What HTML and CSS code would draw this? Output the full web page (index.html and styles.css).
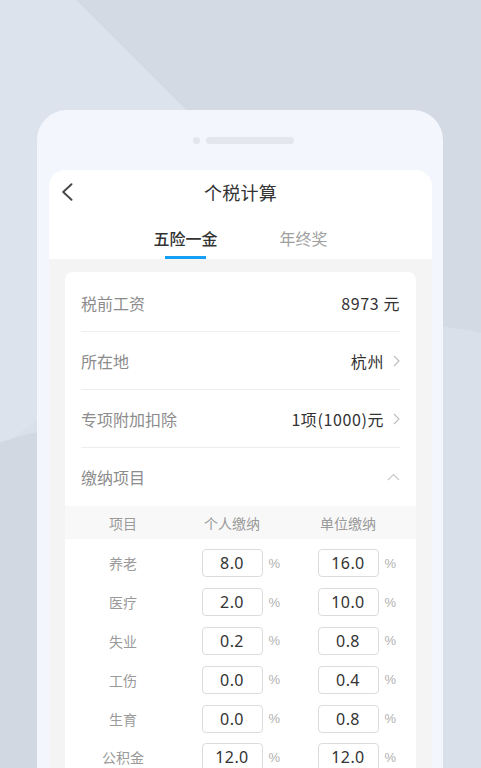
FILE: index.html
```html
<!DOCTYPE html>
<html lang="zh-CN">
<head>
<meta charset="utf-8">
<title>个税计算</title>
<link rel="stylesheet" href="styles.css">
</head>
<body>
<div class="stage">
  <div class="phone">
    <div class="notch"><span class="cam"></span><span class="speaker"></span></div>
    <div class="screen">
      <div class="nav">
        <svg class="back" width="12" height="18" viewBox="0 0 12 18"><path d="M10.5 1.2 L2.2 9 L10.5 16.8" fill="none" stroke="#474747" stroke-width="1.9" stroke-linecap="round" stroke-linejoin="round"/></svg>
        <div class="title">个税计算</div>
        <span></span>
      </div>
      <div class="tabs">
        <div class="tab active">五险一金</div>
        <div class="tab">年终奖</div>
      </div>
      <div class="content">
        <div class="card">
          <div class="row"><span class="label">税前工资</span><span class="value">8973 元</span></div>
          <div class="row"><span class="label">所在地</span><span class="value">杭州<svg class="chev" width="7" height="12" viewBox="0 0 7 12"><path d="M1 1 L6 6 L1 11" fill="none" stroke="#bdbdbd" stroke-width="1.1"/></svg></span></div>
          <div class="row"><span class="label">专项附加扣除</span><span class="value">1项(1000)元<svg class="chev" width="7" height="12" viewBox="0 0 7 12"><path d="M1 1 L6 6 L1 11" fill="none" stroke="#bdbdbd" stroke-width="1.1"/></svg></span></div>
          <div class="row last"><span class="label">缴纳项目</span><svg class="up" width="13" height="8" viewBox="0 0 13 8"><path d="M1 7 L6.5 1.5 L12 7" fill="none" stroke="#c8c8c8" stroke-width="1.1"/></svg></div>
          <div class="thead"><span>项目</span><span>个人缴纳</span><span>单位缴纳</span></div>
          <div class="tbody">
            <div class="trow"><span class="name">养老</span><span class="cell"><input class="num" value="8.0" readonly><i>%</i></span><span class="cell"><input class="num" value="16.0" readonly><i>%</i></span></div>
            <div class="trow"><span class="name">医疗</span><span class="cell"><input class="num" value="2.0" readonly><i>%</i></span><span class="cell"><input class="num" value="10.0" readonly><i>%</i></span></div>
            <div class="trow"><span class="name">失业</span><span class="cell"><input class="num" value="0.2" readonly><i>%</i></span><span class="cell"><input class="num" value="0.8" readonly><i>%</i></span></div>
            <div class="trow"><span class="name">工伤</span><span class="cell"><input class="num" value="0.0" readonly><i>%</i></span><span class="cell"><input class="num" value="0.4" readonly><i>%</i></span></div>
            <div class="trow"><span class="name">生育</span><span class="cell"><input class="num" value="0.0" readonly><i>%</i></span><span class="cell"><input class="num" value="0.8" readonly><i>%</i></span></div>
            <div class="trow"><span class="name">公积金</span><span class="cell"><input class="num" value="12.0" readonly><i>%</i></span><span class="cell"><input class="num" value="12.0" readonly><i>%</i></span></div>
          </div>
        </div>
      </div>
    </div>
  </div>
</div>
</body>
</html>
```

FILE: styles.css
```css
html, body {
  margin: 0;
  padding: 0;
}

body {
  font-family: "Noto Sans CJK SC", "Noto Sans", sans-serif;
}

.stage {
  width: 481px;
  height: 768px;
  overflow: hidden;
  padding-top: 110px;
  box-sizing: border-box;
  background:
    radial-gradient(circle at 99px 726px, #d1d8e2 0 300px, rgba(209,216,226,0) 300.5px),
    radial-gradient(circle at 367px 922px, #d9e0ea 0 600px, rgba(217,224,234,0) 600.5px),
    linear-gradient(45deg, #dce3ec 0 54.95%, rgba(220,227,236,0) 54.95%) 0 0 / 768px 768px no-repeat,
    #d3dae4;
}

.phone {
  margin-left: 37px;
  width: 406px;
  height: 700px;
  background: #f3f6fd;
  border-radius: 30px 30px 0 0;
  padding: 0 11px 0 12px;
  box-sizing: border-box;
}

.notch {
  height: 60px;
  display: flex;
  align-items: center;
  justify-content: center;
  gap: 6px;
  padding-left: 5px;
}

.cam {
  width: 7px;
  height: 7px;
  border-radius: 50%;
  background: #e3e6ec;
}

.speaker {
  width: 88px;
  height: 7px;
  border-radius: 4px;
  background: #e3e6ec;
}

.screen {
  background: #f4f4f4;
  border-radius: 16px 16px 0 0;
  overflow: hidden;
  height: 640px;
}

.nav {
  height: 44px;
  background: #fff;
  display: grid;
  grid-template-columns: 1fr auto 1fr;
  align-items: center;
}

.back {
  margin-left: 12px;
  display: block;
}

.title {
  font-size: 18px;
  color: #333;
  line-height: 24px;
  letter-spacing: 0.3px;
}

.tabs {
  height: 45px;
  background: #fff;
  display: flex;
  justify-content: center;
  gap: 62px;
}

.tab {
  display: flex;
  flex-direction: column;
  align-items: center;
  padding-top: 13px;
  font-size: 16px;
  line-height: 22px;
  color: #a0a0a0;
}

.tab::after {
  content: "";
  width: 41px;
  height: 3px;
  margin-top: 7px;
  background: transparent;
}

.tab.active {
  color: #333;
  font-weight: 500;
}

.tab.active::after {
  background: #16a0f5;
}

.content {
  padding: 13px 16px 0;
}

.card {
  background: #fff;
  border-radius: 8px;
  overflow: hidden;
  padding-top: 2px;
}

.row {
  height: 58px;
  box-sizing: border-box;
  margin: 0 16px;
  border-bottom: 1px solid #ededed;
  display: flex;
  align-items: center;
  justify-content: space-between;
}

.row.last {
  border-bottom: none;
}

.label {
  font-size: 16px;
  color: #8c8c8c;
}

.value {
  font-size: 16px;
  color: #333;
  display: flex;
  align-items: center;
  gap: 9px;
  letter-spacing: 0.6px;
}

.chev, .up {
  display: block;
}

.thead {
  height: 33px;
  background: #f8f8f8;
  display: grid;
  grid-template-columns: 116px 102px 130px;
  align-items: center;
  justify-items: center;
  font-size: 14px;
  color: #9a9a9a;
}

.tbody {
  padding-top: 5px;
}

.trow {
  height: 38.8px;
  display: grid;
  grid-template-columns: 116px 102px 130px;
  align-items: center;
}

.name {
  text-align: center;
  font-size: 14px;
  color: #9a9a9a;
}

.cell {
  display: grid;
  grid-template-columns: 1fr 61px 1fr;
  align-items: center;
}

.num {
  grid-column: 2;
  width: 61px;
  height: 28px;
  box-sizing: border-box;
  border: 1px solid #dcdcdc;
  border-radius: 4px;
  padding: 0;
  margin: 0;
  text-align: center;
  font-family: "Noto Sans", "Noto Sans CJK SC", sans-serif;
  font-size: 16px;
  letter-spacing: 0.4px;
  color: #333;
  background: #fff;
  outline: none;
}

.cell i {
  font-style: normal;
  font-family: "Liberation Sans", sans-serif;
  font-size: 13px;
  color: #b0b0b0;
  padding-left: 6px;
}
```
